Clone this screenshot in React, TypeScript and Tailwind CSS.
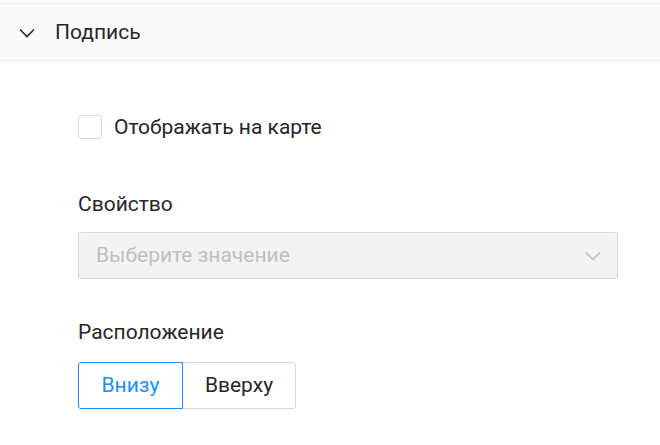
import React, { useState } from 'react';

const Chevron = ({ className }: { className: string }) => (
  <svg className={className} width="16" height="10" viewBox="0 0 16 10" fill="none">
    <path d="M1 1.5 L8 8.5 L15 1.5" stroke="currentColor" strokeWidth="1.6" />
  </svg>
);

const App = () => {
  const [checked, setChecked] = useState(false);
  const [position, setPosition] = useState<'bottom' | 'top'>('bottom');

  return (
    <div className="w-[660px] h-[445px] bg-white font-['Roboto',sans-serif] text-[#262626] pt-[3px]">
      <div className="h-[58px] bg-[#fafafa] border-y border-[#e8e8e8] flex items-center pl-[19px]">
        <Chevron className="text-[#262626] mt-[1px]" />
        <span className="ml-[20px] text-[21px] leading-none">Подпись</span>
      </div>

      <div className="pl-[78px] pr-[42px]">
        <label className="mt-[54px] flex items-center cursor-pointer">
          <span
            className={`w-[24px] h-[24px] rounded-[3px] border ${checked ? 'border-[#1890ff] bg-[#1890ff]' : 'border-[#d9d9d9] bg-white'}`}
            onClick={() => setChecked(!checked)}
          />
          <span className="ml-[12px] text-[21px] leading-none">Отображать на карте</span>
        </label>

        <div className="mt-[55px] text-[21px] leading-none">Свойство</div>
        <div className="mt-[17px] h-[47px] bg-[#f3f3f3] border border-[#d9d9d9] rounded-[3px] flex items-center justify-between pl-[17px] pr-[16px]">
          <span className="text-[21px] text-[#bfbfbf] leading-none">Выберите значение</span>
          <Chevron className="text-[#bfbfbf]" />
        </div>

        <div className="mt-[43px] text-[21px] leading-none">Расположение</div>
        <div className="mt-[19px] flex">
          <button
            className={`h-[47px] w-[105px] text-[21px] rounded-l-[3px] border ${position === 'bottom' ? 'border-[#1890ff] text-[#1890ff] z-10' : 'border-[#d9d9d9]'}`}
            onClick={() => setPosition('bottom')}
          >
            Внизу
          </button>
          <button
            className={`h-[47px] w-[114px] -ml-px text-[21px] rounded-r-[3px] border ${position === 'top' ? 'border-[#1890ff] text-[#1890ff] z-10' : 'border-[#d9d9d9]'}`}
            onClick={() => setPosition('top')}
          >
            Вверху
          </button>
        </div>
      </div>
    </div>
  );
};

export default App;
